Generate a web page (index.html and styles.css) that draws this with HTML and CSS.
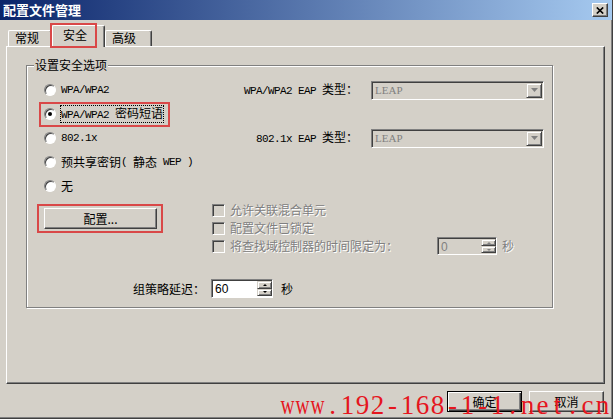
FILE: index.html
```html
<!DOCTYPE html>
<html lang="zh-CN">

<head>
    <meta charset="UTF-8">
    <title>配置文件管理</title>
    <link rel="stylesheet" href="styles.css">
</head>

<body>
    <div class="window">
        <div class="titlebar">
            <span class="title">配置文件管理</span>
            <span class="close-btn">
                <svg width="8" height="7" viewBox="0 0 8 7">
                    <path d="M0.8 0.5L7.2 6.5M7.2 0.5L0.8 6.5" stroke="#000" stroke-width="1.7" />
                </svg>
            </span>
        </div>

        <div class="tabs">
            <div class="tab tab-general">常规</div>
            <div class="tab tab-security active"><span class="tab-mark">安全</span></div>
            <div class="tab tab-advanced">高级</div>
        </div>

        <div class="panel">
            <fieldset class="group">
                <legend>设置安全选项</legend>
                <div class="group-body">
                    <div class="options">
                        <label class="radio row-1"><span class="dot"></span><span class="en">WPA/WPA2</span></label>
                        <label class="radio row-2 marked"><span class="dot checked"></span><span class="focus"><span
                                    class="en">WPA/WPA2 </span>密码短语</span></label>
                        <label class="radio row-3"><span class="dot"></span><span class="en">802.1x</span></label>
                        <label class="radio row-4"><span class="dot"></span>预共享密钥<span class="en">( </span>静态<span
                                class="en"> WEP )</span></label>
                        <label class="radio row-5"><span class="dot"></span>无</label>

                        <span class="eap-label row-1"><span class="en">WPA/WPA2 EAP </span>类型：</span>
                        <div class="combo row-1">
                            <span class="combo-value">LEAP</span>
                            <span class="drop"><svg width="7" height="4" viewBox="0 0 7 4">
                                    <path d="M0 0H7L3.5 4Z" fill="#808080" />
                                </svg></span>
                        </div>

                        <span class="eap-label row-3"><span class="en">802.1x EAP </span>类型：</span>
                        <div class="combo row-3">
                            <span class="combo-value">LEAP</span>
                            <span class="drop"><svg width="7" height="4" viewBox="0 0 7 4">
                                    <path d="M0 0H7L3.5 4Z" fill="#808080" />
                                </svg></span>
                        </div>
                    </div>

                    <div class="lower">
                        <div class="config-cell">
                            <span class="marked-btn">
                                <span class="btn config">配置...</span>
                            </span>
                        </div>
                        <div class="checks">
                            <div class="check"><span class="box"></span>允许关联混合单元</div>
                            <div class="check"><span class="box"></span>配置文件已锁定</div>
                            <div class="check">
                                <span class="box"></span>
                                <span class="check-text">将查找域控制器的时间限定为：</span>
                                <span class="spin disabled">
                                    <span class="spin-value">0</span>
                                    <span class="spin-arrows"><span class="arrow up"></span><span
                                            class="arrow down"></span></span>
                                </span>
                                <span class="unit">秒</span>
                            </div>
                        </div>
                    </div>

                    <div class="delay">
                        <span class="delay-label">组策略延迟：</span>
                        <span class="spin">
                            <span class="spin-value">60</span>
                            <span class="spin-arrows"><span class="arrow up"></span><span
                                    class="arrow down"></span></span>
                        </span>
                        <span class="unit">秒</span>
                    </div>
                </div>
            </fieldset>
        </div>

        <div class="actions">
            <span class="btn default">确定</span>
            <span class="btn">取消</span>
        </div>

        <!-- site watermark laid over the dialog -->
        <div class="watermark"><span class="w">w</span><span class="w">w</span><span
                class="w">w</span><span>.</span><span>1</span><span>9</span><span>2</span><span>-</span><span>1</span><span>6</span><span>8</span><span>-</span><span>1</span><span>-</span><span>1</span><span>.</span><span>n</span><span>e</span><span>t</span><span>.</span><span>c</span><span>n</span></div>
    </div>
</body>

</html>
```

FILE: styles.css
```css
:root {
    --face: #d4d0c8;
    --light: #ffffff;
    --shadow: #808080;
    --dark: #404040;
    --mark: #d94848;
    --disabled: #808080;
}

body {
    margin: 0;
    background: var(--face);
    font-family: "Noto Sans CJK SC", "Liberation Sans", sans-serif;
    font-size: 12px;
    line-height: 12px;
    color: #000;
}

.en {
    font-family: "Liberation Mono", monospace;
    font-size: 11px;
    letter-spacing: -0.6px;
    white-space: pre;
}

.window {
    position: relative;
    width: 613px;
    height: 419px;
    box-sizing: border-box;
    overflow: hidden;
    border-right: 1px solid var(--dark);
    border-bottom: 1px solid var(--dark);
    box-shadow: inset -1px -1px var(--shadow);
}

/* title bar */
.titlebar {
    display: flex;
    align-items: center;
    justify-content: space-between;
    height: 20px;
    padding: 0 4px 0 3px;
    background: linear-gradient(to right, #0a246a, #a6caf0);
}

.title {
    color: #fff;
    font-weight: bold;
    font-size: 13px;
    line-height: 13px;
    margin-top: -2px;
}

.close-btn {
    display: flex;
    align-items: center;
    justify-content: center;
    width: 16px;
    height: 14px;
    box-sizing: border-box;
    background: var(--face);
    border: 1px solid;
    border-color: var(--light) var(--dark) var(--dark) var(--light);
    box-shadow: inset -1px -1px var(--shadow);
}

/* tabs */
.tabs {
    display: flex;
    align-items: flex-end;
    height: 26px;
    padding-left: 8px;
}

.tab {
    box-sizing: border-box;
    height: 16px;
    padding-left: 6px;
    line-height: 14px;
    border: 1px solid;
    border-bottom: 0;
    border-color: var(--light) var(--dark) transparent var(--light);
    border-radius: 2px 2px 0 0;
    box-shadow: inset -1px 0 var(--shadow);
}

.tab-general {
    width: 44px;
}

.tab-advanced {
    width: 47px;
}

.tab.active {
    position: relative;
    z-index: 1;
    width: 53px;
    height: 22px;
    margin-bottom: -1px;
    padding: 0;
    background: var(--face);
}

.tab-mark {
    display: block;
    box-sizing: border-box;
    width: 43px;
    height: 21px;
    margin: -1px 0 0 -1px;
    padding-left: 11px;
    line-height: 20px;
    outline: 2px solid var(--mark);
}

/* tab panel */
.panel {
    box-sizing: border-box;
    width: 599px;
    height: 338px;
    margin-left: 6px;
    padding: 12px 0 0 19px;
    border: 1px solid;
    border-color: var(--light) var(--dark) var(--dark) var(--light);
    box-shadow: inset -1px -1px var(--shadow);
}

.group {
    box-sizing: border-box;
    width: 527px;
    margin: 0;
    padding: 0;
    border: 1px solid var(--shadow);
    box-shadow: inset 1px 1px var(--light), 1px 1px var(--light);
}

.group legend {
    margin-left: 7px;
    padding: 0 1px;
    height: 12px;
    line-height: 12px;
    background: var(--face);
}

.group-body {
    padding: 7px 8px 9px 17px;
}

.options {
    display: grid;
    grid-template-columns: 1fr auto 173px;
    grid-template-rows: repeat(5, 24px);
    column-gap: 13px;
}

.row-1 {
    grid-row: 1;
}

.row-2 {
    grid-row: 2;
}

.row-3 {
    grid-row: 3;
}

.row-4 {
    grid-row: 4;
}

.row-5 {
    grid-row: 5;
}

.radio {
    grid-column: 1;
    display: flex;
    align-items: center;
    align-self: center;
    justify-self: start;
    height: 21px;
}

.radio.marked {
    margin-left: -3px;
    padding: 0 4px 0 3px;
    outline: 2px solid var(--mark);
}

.dot {
    display: flex;
    align-items: center;
    justify-content: center;
    width: 12px;
    height: 12px;
    margin-right: 5px;
    box-sizing: border-box;
    border-radius: 50%;
    background: #fff;
    border: 1px solid;
    border-color: var(--shadow) var(--light) var(--light) var(--shadow);
    box-shadow: inset 1px 1px var(--dark);
}

.dot.checked::after {
    content: "";
    width: 4px;
    height: 4px;
    border-radius: 50%;
    background: #000;
}

.focus {
    margin-left: -1px;
    padding: 2px 1px;
    outline: 1px dotted #000;
    outline-offset: -1px;
}

.eap-label {
    grid-column: 2;
    align-self: center;
    justify-self: end;
}

.combo {
    grid-column: 3;
    align-self: center;
    display: flex;
    align-items: center;
    justify-content: space-between;
    height: 19px;
    box-sizing: border-box;
    padding: 0 1px 0 2px;
    background: var(--face);
    border: 1px solid;
    border-color: var(--shadow) var(--light) var(--light) var(--shadow);
    box-shadow: inset 1px 1px var(--dark);
}

.combo-value {
    padding-left: 1px;
    font-family: "Liberation Serif", serif;
    font-size: 11px;
    color: var(--disabled);
}

.drop {
    display: flex;
    align-items: center;
    justify-content: center;
    width: 16px;
    height: 15px;
    box-sizing: border-box;
    border: 1px solid;
    border-color: var(--face) var(--dark) var(--dark) var(--face);
    box-shadow: inset 1px 1px var(--light), inset -1px -1px var(--shadow);
}

/* buttons */
.btn {
    display: flex;
    align-items: center;
    justify-content: center;
    box-sizing: border-box;
    width: 75px;
    height: 21px;
    background: var(--face);
    border: 1px solid;
    border-color: var(--light) var(--dark) var(--dark) var(--light);
    box-shadow: inset -1px -1px var(--shadow);
}

.btn.default {
    border-color: #000;
    box-shadow: inset 1px 1px var(--light), inset -1px -1px var(--dark), inset -2px -2px var(--shadow);
}

/* lower block */
.lower {
    display: flex;
    margin-top: 3px;
}

.config-cell {
    width: 168px;
    padding-top: 3px;
}

.marked-btn {
    display: inline-block;
    margin-left: -7px;
    padding: 2px 4px 2px 5px;
    border: 2px solid var(--mark);
}

.btn.config {
    width: 113px;
}

.check {
    display: flex;
    align-items: center;
    height: 18px;
    color: var(--disabled);
    text-shadow: 1px 1px var(--light);
}

.box {
    width: 13px;
    height: 13px;
    margin-right: 5px;
    box-sizing: border-box;
    background: var(--face);
    border: 1px solid;
    border-color: var(--shadow) var(--light) var(--light) var(--shadow);
    box-shadow: inset 1px 1px var(--dark);
}

.check-text {
    width: 207px;
}

.spin {
    display: flex;
    box-sizing: border-box;
    width: 62px;
    height: 19px;
    background: #fff;
    border: 1px solid;
    border-color: var(--shadow) var(--light) var(--light) var(--shadow);
    box-shadow: inset 1px 1px var(--dark);
}

.spin.disabled {
    width: 60px;
    height: 18px;
    background: var(--face);
}

.spin-value {
    flex: 1;
    padding: 2px 0 0 3px;
    font-family: "Liberation Sans", sans-serif;
    font-size: 12px;
    line-height: 14px;
    text-shadow: none;
}

.spin.disabled .spin-value {
    color: var(--disabled);
}

.spin-arrows {
    display: flex;
    flex-direction: column;
    width: 15px;
    padding: 1px 0;
}

.arrow {
    flex: 1;
    display: flex;
    align-items: center;
    justify-content: center;
    background: var(--face);
    border: 1px solid;
    border-color: var(--face) var(--dark) var(--dark) var(--face);
    box-shadow: inset 1px 1px var(--light), inset -1px -1px var(--shadow);
}

.arrow::after {
    content: "";
    border-left: 2px solid transparent;
    border-right: 2px solid transparent;
}

.arrow.up::after {
    border-bottom: 2px solid #000;
}

.arrow.down::after {
    border-top: 2px solid #000;
}

.spin.disabled .arrow.up::after {
    border-bottom-color: var(--disabled);
}

.spin.disabled .arrow.down::after {
    border-top-color: var(--disabled);
}

.unit {
    margin-left: 5px;
}

.delay {
    display: flex;
    align-items: center;
    height: 19px;
    margin-top: 24px;
    padding-left: 89px;
}

.delay-label {
    margin-right: 6px;
}

.delay .unit {
    margin-left: 8px;
}

/* dialog buttons */
.actions {
    display: flex;
    justify-content: flex-end;
    gap: 7px;
    margin: 7px 8px 0 0;
}

.watermark {
    position: absolute;
    left: 280px;
    top: 392px;
    display: flex;
    font-family: "Liberation Serif", serif;
    font-size: 27px;
    line-height: 27px;
    color: #e5161e;
    white-space: nowrap;
}

.watermark span {
    display: flex;
    justify-content: center;
    width: 15px;
}

.watermark .w {
    transform: scaleX(0.72);
}
```
